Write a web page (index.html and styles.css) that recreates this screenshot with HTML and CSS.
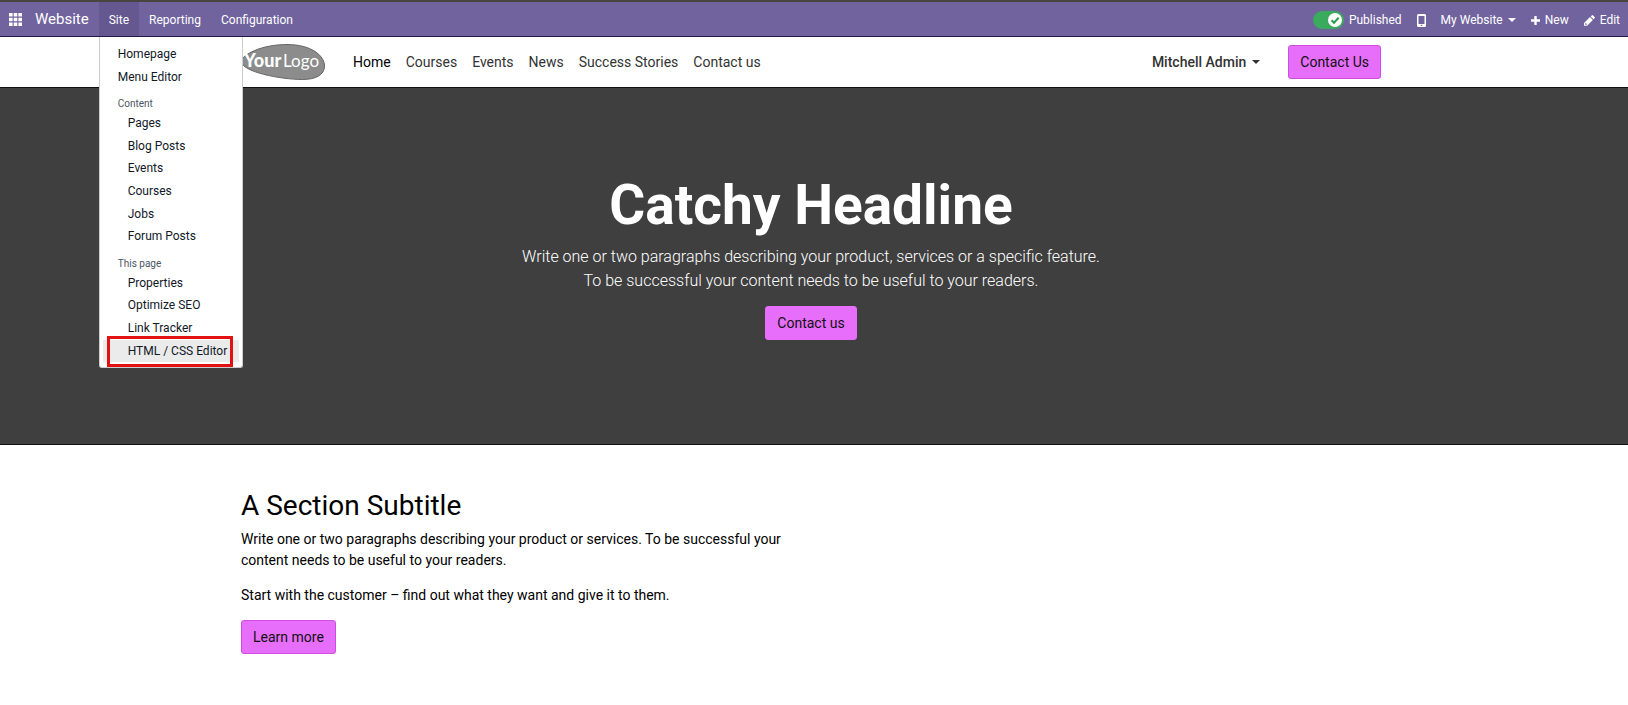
FILE: index.html
```html
<!DOCTYPE html>
<html lang="en">
<head>
<meta charset="utf-8">
<title>Website</title>
<link rel="stylesheet" href="styles.css">
</head>
<body>
<nav class="topbar" aria-label="Backend">
  <a class="apps" href="#" aria-label="Apps">
    <svg width="13" height="13" viewBox="0 0 13 13" fill="currentColor"><path d="M0 0h3.6v3.6H0zM4.7 0h3.6v3.6H4.7zM9.4 0H13v3.6H9.4zM0 4.7h3.6v3.6H0zM4.7 4.7h3.6v3.6H4.7zM9.4 4.7H13v3.6H9.4zM0 9.4h3.6V13H0zM4.7 9.4h3.6V13H4.7zM9.4 9.4H13V13H9.4z"/></svg>
  </a>
  <a class="brand" href="#">Website</a>
  <div class="menu">
    <button class="menu-item active" type="button" aria-expanded="true">Site</button>
    <div class="dropdown">
      <a class="entry" href="#">Homepage</a>
      <a class="entry" href="#">Menu Editor</a>
      <div class="group">Content</div>
      <a class="entry sub" href="#">Pages</a>
      <a class="entry sub" href="#">Blog Posts</a>
      <a class="entry sub" href="#">Events</a>
      <a class="entry sub" href="#">Courses</a>
      <a class="entry sub" href="#">Jobs</a>
      <a class="entry sub" href="#">Forum Posts</a>
      <div class="group">This page</div>
      <a class="entry sub" href="#">Properties</a>
      <a class="entry sub" href="#">Optimize SEO</a>
      <a class="entry sub" href="#">Link Tracker</a>
      <a class="entry sub hovered" href="#">HTML / CSS Editor</a>
    </div>
  </div>
  <button class="menu-item" type="button">Reporting</button>
  <button class="menu-item" type="button">Configuration</button>
  <div class="systray">
    <label class="publish"><input class="switch" type="checkbox" checked><svg class="check" width="14" height="14" viewBox="0 0 14 14"><circle cx="7" cy="7" r="7" fill="#fff"/><path d="M3.500 7.200 6 9.700l4.600-4.900" fill="none" stroke="#2a9a4a" stroke-width="2"/></svg>Published</label>
    <button class="tool" type="button" aria-label="Mobile preview"><svg width="9" height="13" viewBox="0 0 9 13"><path fill="currentColor" fill-rule="evenodd" d="M1.500 0h6A1.500 1.500 0 0 1 9 1.500v10A1.500 1.500 0 0 1 7.500 13h-6A1.500 1.500 0 0 1 0 11.500v-10A1.500 1.500 0 0 1 1.500 0zM1.500 2v8h6V2zM3.800 10.800v1.200h1.400v-1.200z"/></svg></button>
    <button class="tool" type="button">My Website<svg width="8" height="4" viewBox="0 0 8 4" fill="currentColor"><path d="M0 0h8L4 4z"/></svg></button>
    <button class="tool" type="button"><svg width="9" height="9" viewBox="0 0 9 9" fill="currentColor"><path d="M3.300 0h2.400v3.300H9v2.400H5.700V9H3.300V5.700H0V3.300h3.300z"/></svg>New</button>
    <button class="tool" type="button"><svg width="11" height="11" viewBox="0 0 11 11" fill="currentColor"><path d="M7.700.4a1 1 0 0 1 1.400 0l1.500 1.500a1 1 0 0 1 0 1.400l-1 1-2.900-2.900zM6 2.100 8.900 5l-5.800 5.800H0V7.900zM1.200 8.500v1.300h1.300l.5-.5-1.300-1.300z"/></svg>Edit</button>
  </div>
</nav>
<div class="site">
  <header class="header">
    <div class="container header-row">
      <a class="logo" href="#" aria-label="Your Logo">
        <svg width="84" height="36" viewBox="0 0 84 36"><path d="M.5 17C1 11 20 .5 46 .5c24 0 37.500 11 37.500 21.500 0 9-9 13.500-22 13.500C40 35.500 0 28 .5 17z" fill="#8c8c8c" stroke="#666"/><text class="logo-bold" x="3" y="23">Your</text><text class="logo-thin" x="42" y="23">Logo</text></svg>
      </a>
      <nav class="links" aria-label="Main">
        <a class="current" href="#">Home</a>
        <a href="#">Courses</a>
        <a href="#">Events</a>
        <a href="#">News</a>
        <a href="#">Success Stories</a>
        <a href="#">Contact us</a>
      </nav>
      <button class="user" type="button">Mitchell Admin<svg width="8" height="4" viewBox="0 0 8 4" fill="currentColor"><path d="M0 0h8L4 4z"/></svg></button>
      <a class="btn" href="#">Contact Us</a>
    </div>
  </header>
  <main>
    <section class="hero">
      <h1>Catchy Headline</h1>
      <p>Write one or two paragraphs describing your product, services or a specific feature.<br>To be successful your content needs to be useful to your readers.</p>
      <a class="btn" href="#">Contact us</a>
    </section>
    <section class="container about">
      <div class="column">
        <h2>A Section Subtitle</h2>
        <p>Write one or two paragraphs describing your product or services. To be successful your content needs to be useful to your readers.</p>
        <p>Start with the customer – find out what they want and give it to them.</p>
        <a class="btn" href="#">Learn more</a>
      </div>
    </section>
  </main>
</div>
</body>
</html>
```
FILE: styles.css
```css
* { box-sizing: border-box; }
body {
  margin: 0;
  background: #fff;
  color: #000;
  font-family: Roboto, "Liberation Sans", sans-serif;
  font-size: 14px;
  line-height: 21px;
}
a { color: inherit; text-decoration: none; }
button { font: inherit; color: inherit; background: none; border: 0; padding: 0; }
svg { display: block; flex: none; }

.topbar {
  display: flex;
  height: 37px;
  border-top: 2px solid #47453f;
  border-bottom: 1px solid #251747;
  background: #71639e;
  color: #fff;
  font-size: 12px;
}
.apps { display: flex; align-items: center; padding: 0 13px 0 9px; }
.brand { display: flex; align-items: center; padding-right: 10px; font-size: 15px; }
.menu { position: relative; display: flex; }
.menu-item { padding: 2px 10px 0; }
.active { background: #655890; }

.dropdown {
  position: absolute;
  z-index: 2;
  top: 35px;
  left: 0;
  width: 144px;
  padding: 6px 0 5px;
  background: #fff;
  color: #111827;
  border: 1px solid #ccc;
  border-top: 0;
  border-radius: 0 0 3px 3px;
  white-space: nowrap;
}
.entry { display: block; padding: 2px 18px; line-height: 1.55; }
.sub { padding-left: 28px; }
.group { padding: 8px 18px 0; font-size: 10px; line-height: 16px; color: #4b5563; }
.hovered { background: #ebebeb; margin: 0 3px; padding: 2px 0 2px 25px; position: relative; }
.hovered::after {
  content: "";
  position: absolute;
  inset: -4px 6px -5px 4px;
  border: 3px solid #e31212;
}

.systray { display: flex; margin-left: auto; gap: 15px; padding: 2px 8px 0 0; }
.publish { position: relative; display: flex; align-items: center; gap: 5px; }
.switch { appearance: none; width: 31px; height: 18px; margin: 0; border-radius: 9px; background: #3aaa5c; }
.check { position: absolute; left: 15px; }
.tool { display: flex; align-items: center; gap: 5px; }

.site { padding-right: 6px; }
.container { width: 100%; max-width: 1140px; margin: 0 auto; }
.header-row { display: flex; align-items: center; height: 50px; }
.logo { margin-right: 28px; }
.logo-bold { font: 900 18px Lato, sans-serif; fill: #fff; }
.logo-thin { font: 400 17px Lato, sans-serif; fill: #fff; }
.links { display: flex; gap: 15px; color: #333; }
.current { color: #000; }
.user { display: flex; align-items: center; gap: 6px; margin: 0 28px 0 auto; font-weight: 500; color: #333; }
.btn {
  display: inline-block;
  padding: 6px 11px;
  border: 1px solid #d04be0;
  border-radius: 3px;
  background: #e66efa;
  color: #111;
  line-height: 20px;
}
.hero {
  margin-right: -6px;
  padding: 87px 6px 104px 0;
  background: #3f3f3f;
  border-top: 1px solid #111;
  border-bottom: 1px solid #111;
  color: #fff;
  text-align: center;
}
.hero .btn { border-color: #e66efa; }
.hero h1 { margin: 0 0 10px; font-size: 55px; line-height: 60px; font-weight: 700; }
.hero p { margin: 0 0 13px; font-size: 16px; line-height: 24px; font-weight: 300; }
.about { padding-top: 44px; }
.column { max-width: 570px; }
.about h2 { margin: 0 0 6px; font-size: 28px; line-height: 34px; font-weight: 400; }
.about p { margin: 0 0 14px; }
```
